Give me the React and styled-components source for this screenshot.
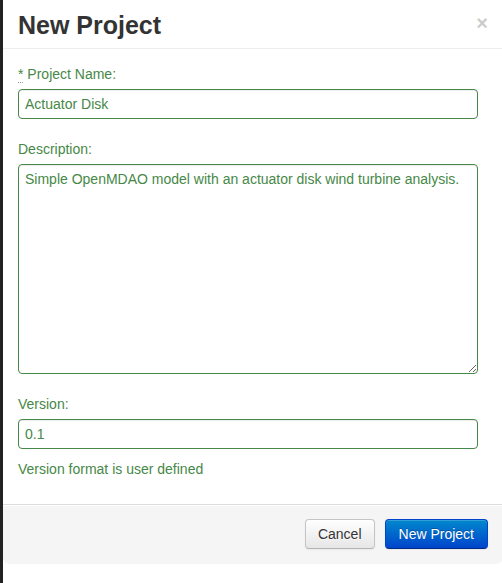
import React from 'react';
import styled, { createGlobalStyle } from 'styled-components';

const GlobalStyle = createGlobalStyle`
  html, body {
    margin: 0;
    padding: 0;
    overflow: hidden;
    background: #fff;
  }
  body {
    font-family: "Liberation Sans", Arial, sans-serif;
    font-size: 14px;
    line-height: 20px;
    color: #333;
  }
`;

const Page = styled.div`
  height: 583px;
  background: linear-gradient(to right, #222 0, #222 3px, #fff 3px);
  display: flex;
  align-items: flex-start;
`;

const Modal = styled.div`
  flex: none;
  width: 500px;
  margin-left: 3px;
  background: #fff;
  border-radius: 6px;
  overflow: hidden;
`;

const Header = styled.div`
  display: flex;
  align-items: flex-start;
  justify-content: space-between;
  padding: 10px 15px 8px;
  border-bottom: 1px solid #eee;
`;

const Title = styled.h3`
  margin: 0;
  font-size: 25px;
  line-height: 30px;
  font-weight: bold;
  color: #333;
`;

const Close = styled.button`
  border: 0;
  background: none;
  padding: 0;
  margin-top: 3px;
  font-family: "Liberation Sans", Arial, sans-serif;
  font-size: 20px;
  line-height: 20px;
  font-weight: bold;
  color: #000;
  opacity: 0.2;
  text-shadow: 0 1px 0 #fff;
  cursor: pointer;
`;

const Body = styled.div`
  padding: 15px 15px 15px;
  display: flex;
  flex-direction: column;
  gap: 20px;
`;

const Field = styled.div`
  display: flex;
  flex-direction: column;
`;

const Label = styled.label`
  display: block;
  margin-bottom: 5px;
  color: #468847;
`;

const Required = styled.abbr`
  text-decoration: none;
  border-bottom: 1px dotted #999;
  cursor: help;
`;

const inputBase = `
  box-sizing: border-box;
  width: 460px;
  margin: 0;
  padding: 4px 6px;
  font-family: "Liberation Sans", Arial, sans-serif;
  font-size: 14px;
  line-height: 20px;
  color: #468847;
  background: #fff;
  border: 1px solid #468847;
  border-radius: 4px;
  box-shadow: inset 0 1px 1px rgba(0, 0, 0, 0.075);
  outline: none;
`;

const Input = styled.input`
  ${inputBase}
  height: 30px;
`;

const TextArea = styled.textarea`
  ${inputBase}
  height: 210px;
  padding-right: 2px;
  resize: vertical;
`;

const Help = styled.span`
  display: block;
  margin-top: 10px;
  margin-bottom: 10px;
  color: #468847;
`;

const Footer = styled.div`
  display: flex;
  justify-content: flex-end;
  gap: 10px;
  padding: 14px 15px 15px;
  background: #f5f5f5;
  border-top: 1px solid #ddd;
  border-radius: 0 0 6px 6px;
  box-shadow: inset 0 1px 0 #fff;
`;

const Button = styled.button`
  height: 30px;
  padding: 4px 12px;
  font-family: "Liberation Sans", Arial, sans-serif;
  font-size: 14px;
  line-height: 20px;
  border-radius: 4px;
  cursor: pointer;
  color: ${p => (p.$primary ? '#fff' : '#333')};
  text-shadow: ${p => (p.$primary ? '0 -1px 0 rgba(0,0,0,0.25)' : '0 1px 1px rgba(255,255,255,0.75)')};
  background: ${p =>
    p.$primary
      ? 'linear-gradient(to bottom, #0088cc, #0044cc)'
      : 'linear-gradient(to bottom, #ffffff, #e6e6e6)'};
  border: 1px solid ${p => (p.$primary ? '#0044cc' : '#c5c5c5')};
  border-bottom-color: ${p => (p.$primary ? '#002a80' : '#b3b3b3')};
  box-shadow: inset 0 1px 0 rgba(255, 255, 255, 0.2), 0 1px 2px rgba(0, 0, 0, 0.05);
  ${p => p.$primary && 'padding: 4px 13px;'}
`;

export default function App() {
  return (
    <>
      <GlobalStyle />
      <Page>
        <Modal>
          <Header>
            <Title>New Project</Title>
            <Close type="button">×</Close>
          </Header>
          <Body>
            <Field>
              <Label>
                <Required title="required">*</Required> Project Name:
              </Label>
              <Input type="text" defaultValue="Actuator Disk" />
            </Field>
            <Field>
              <Label>Description:</Label>
              <TextArea defaultValue="Simple OpenMDAO model with an actuator disk wind turbine analysis." />
            </Field>
            <Field>
              <Label>Version:</Label>
              <Input type="text" defaultValue="0.1" />
              <Help>Version format is user defined</Help>
            </Field>
          </Body>
          <Footer>
            <Button type="button">Cancel</Button>
            <Button type="button" $primary>New Project</Button>
          </Footer>
        </Modal>
      </Page>
    </>
  );
}
